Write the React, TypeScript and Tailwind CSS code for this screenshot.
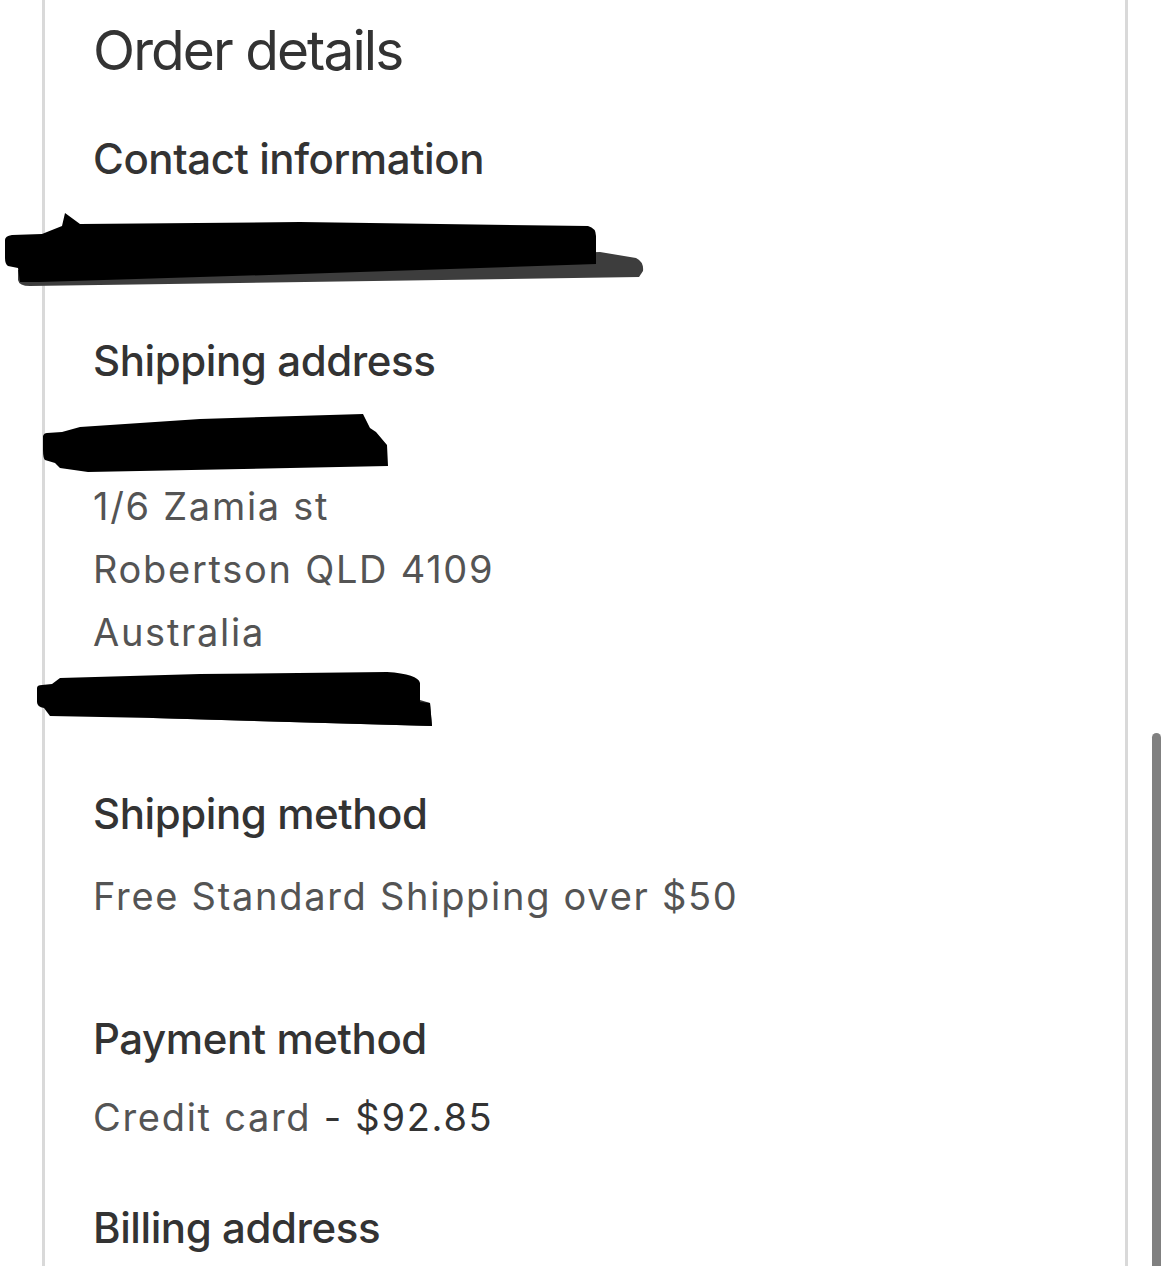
import React from "react";

const font = { fontFamily: "Inter, 'Noto Sans', sans-serif" };

function Heading({ children, className = "" }: { children: React.ReactNode; className?: string }) {
  return (
    <div className={`text-[42px] leading-[56px] font-medium tracking-[-0.01em] text-[#333333] ${className}`}>
      {children}
    </div>
  );
}

function Line({ children, className = "" }: { children?: React.ReactNode; className?: string }) {
  return (
    <div className={`text-[38px] leading-[63px] tracking-[0.045em] text-[#545454] h-[63px] ${className}`}>
      {children}
    </div>
  );
}

export default function App() {
  return (
    <div className="relative min-h-[1266px] w-full bg-white overflow-hidden" style={font}>
      <div className="ml-[42px] w-[1086px] min-h-[1266px] border-x-[3px] border-[#d9d9d9] pl-[48px] pt-[18px]">
        <div className="text-[55px] leading-[64px] tracking-[-0.035em] text-[#333333]">Order details</div>

        <Heading className="mt-[49px]">Contact information</Heading>
        <Line className="mt-[23px]" />

        <Heading className="mt-[60px]">Shipping address</Heading>
        <div className="mt-[23px]">
          <Line />
          <Line>1/6 Zamia st</Line>
          <Line>Robertson QLD 4109</Line>
          <Line>Australia</Line>
          <Line />
        </div>

        <Heading className="mt-[59px]">Shipping method</Heading>
        <Line className="mt-[23px]">Free Standard Shipping over $50</Line>

        <Heading className="mt-[83px]">Payment method</Heading>
        <Line className="mt-[19px]">
          Credit card <span className="text-[#333333]">- $92.85</span>
        </Line>

        <Heading className="mt-[51px]">Billing address</Heading>
      </div>

      {/* redaction marks */}
      <svg className="absolute left-0 top-[200px]" width="660" height="100" viewBox="0 0 660 100">
        <path d="M18,70 L600,52 L636,58 Q644,62 643,71 L639,77 L30,86 Q19,86 18,80 Z" fill="#3d3d3d" />
        <path
          d="M5,40 Q5,36 12,35 L42,34 L62,26 L65,13 L80,24 L300,22 L588,26 Q596,28 596,36 L596,64 L300,74 L40,82 L20,82 L18,68 L8,66 Q5,64 5,58 Z"
          fill="#000"
        />
      </svg>
      <svg className="absolute left-0 top-[400px]" width="400" height="80" viewBox="0 0 400 80">
        <path
          d="M43,36 Q44,33 47,33 L62,32 L80,27 L200,19 L363,14 L370,28 L376,32 L387,45 L388,66 L88,72 L60,68 L55,63 L45,60 Q43,58 43,50 Z"
          fill="#000"
        />
      </svg>
      <svg className="absolute left-0 top-[660px]" width="450" height="80" viewBox="0 0 450 80">
        <path d="M150,57 L420,40 L430,43 L432,66 L153,58 Z" fill="#333" />
        <path
          d="M37,28 Q37,25 42,25 L52,24 L60,18 L200,14 L387,12 Q418,14 420,23 L420,42 L430,43 L432,66 L153,58 L50,56 L44,48 Q37,47 37,42 Z"
          fill="#000"
        />
      </svg>

      {/* scrollbar */}
      <div className="absolute left-[1152px] top-[733px] h-[560px] w-[9px] rounded-full bg-[#808080]" />
    </div>
  );
}
